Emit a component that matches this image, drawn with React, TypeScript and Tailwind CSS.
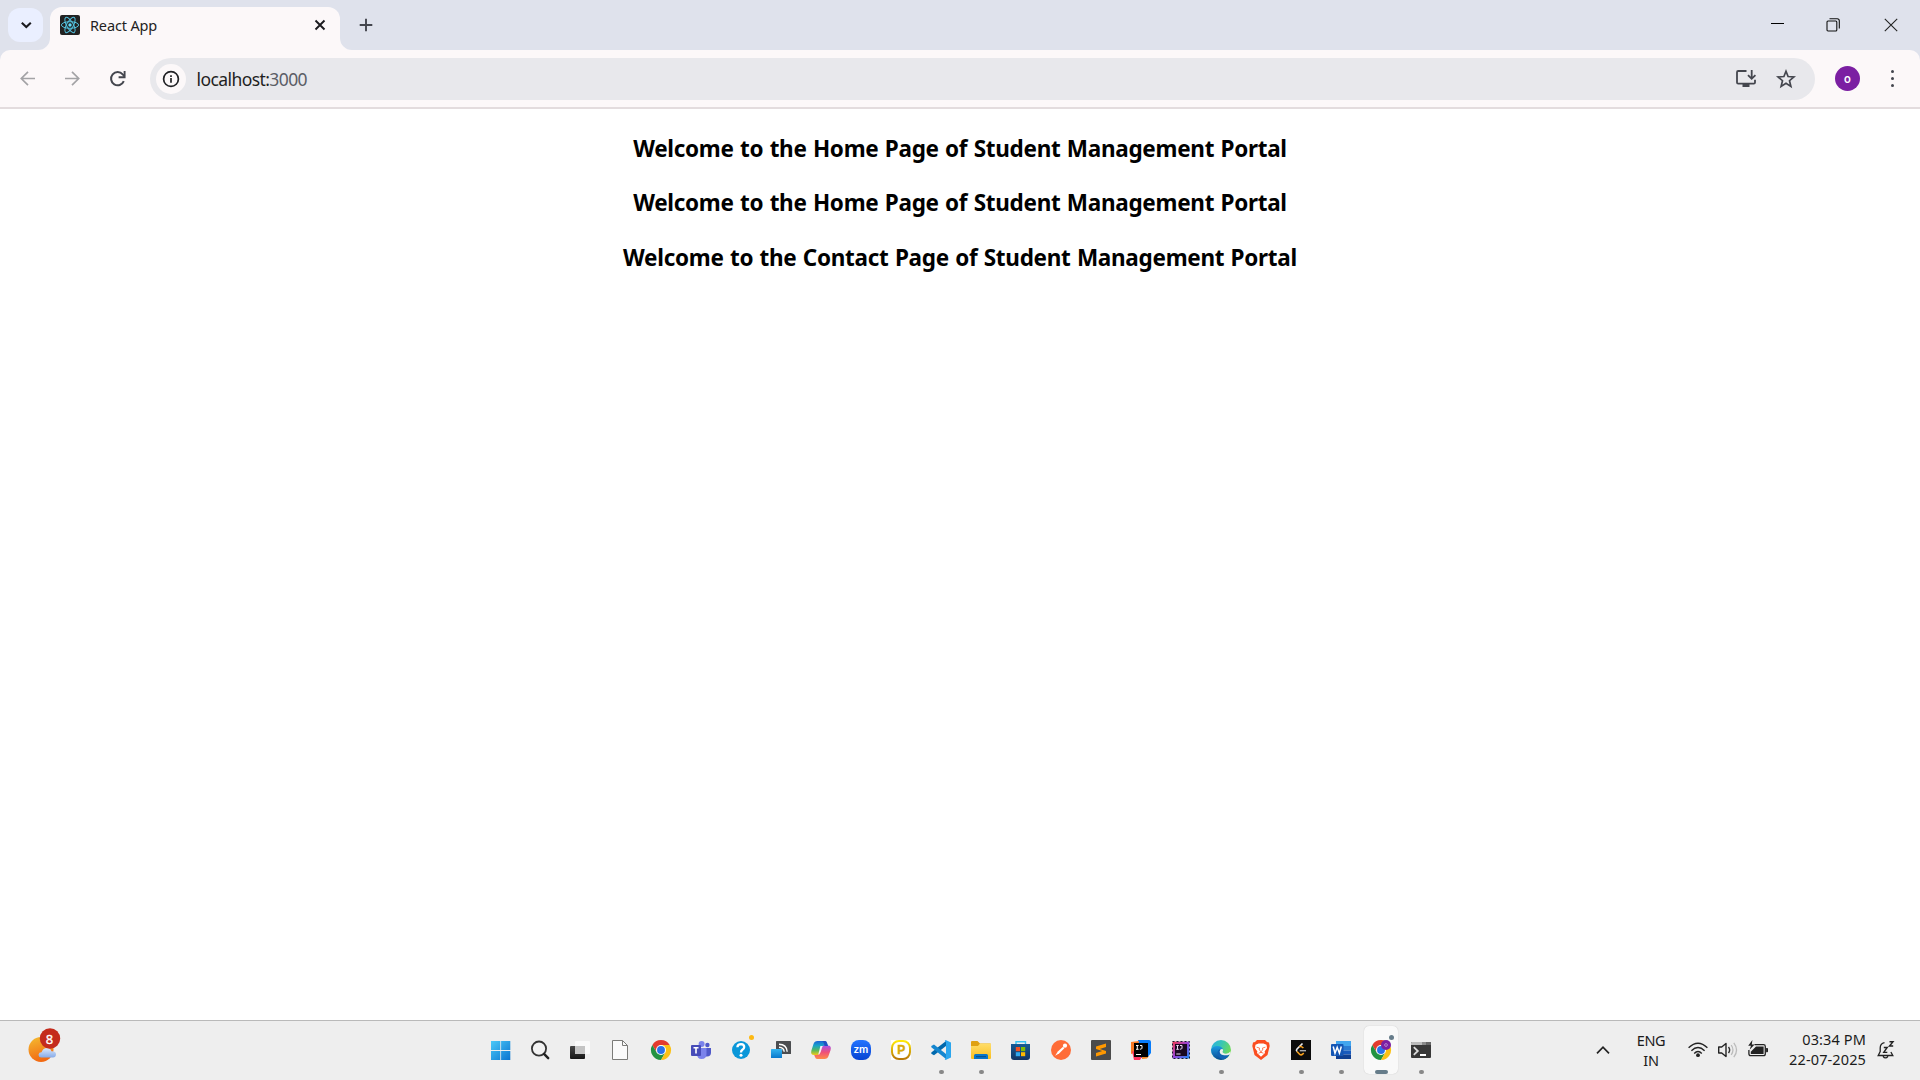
import type { ReactNode } from "react";

type IconProps = { children: ReactNode; size?: number; box?: string; className?: string };

function Icon({ children, size = 20, box, className = "" }: IconProps) {
  return (
    <svg width={size} height={size} viewBox={box ?? `0 0 ${size} ${size}`} fill="none" className={`shrink-0 overflow-visible ${className}`}>
      {children}
    </svg>
  );
}

const uiFont = "font-['Noto_Sans','Open_Sans',sans-serif]";

function ReactLogo() {
  return (
    <Icon>
      <rect width="20" height="20" rx="2" fill="#222" />
      <g stroke="#53c1de" strokeWidth="1">
        <ellipse cx="10" cy="10" rx="8.6" ry="3.3" />
        <ellipse cx="10" cy="10" rx="8.6" ry="3.3" transform="rotate(60 10 10)" />
        <ellipse cx="10" cy="10" rx="8.6" ry="3.3" transform="rotate(120 10 10)" />
      </g>
      <circle cx="10" cy="10" r="1.7" fill="#61dafb" />
    </Icon>
  );
}

function TabStrip() {
  return (
    <div className="flex h-[50px] items-end bg-[#dfe2ec]">
      <div className="mb-2 ml-2 flex h-[34px] w-[35px] items-center justify-center rounded-xl bg-[#eaefff]">
        <Icon size={12}>
          <path d="M1.8 3.8L6.3 8.1L10.8 3.8" stroke="#1b1b1f" strokeWidth="2.1" />
        </Icon>
      </div>
      <div className="relative ml-[7px] flex h-[43px] w-[290px] items-center rounded-t-xl bg-[#fcf8f9] pr-[14px] pb-[7px] pl-[10px]">
        <svg className="absolute bottom-0 -left-3" width="12" height="12" viewBox="0 0 12 12">
          <path d="M12 0V12H0A12 12 0 0 0 12 0Z" fill="#fcf8f9" />
        </svg>
        <svg className="absolute -right-3 bottom-0" width="12" height="12" viewBox="0 0 12 12">
          <path d="M0 0V12H12A12 12 0 0 1 0 0Z" fill="#fcf8f9" />
        </svg>
        <ReactLogo />
        <span className="ml-[10px] flex-1 text-[14.5px] leading-5 tracking-[-0.15px] text-[#1f1f23]">React App</span>
        <Icon size={12}>
          <path d="M1.5 1.5L10.5 10.5M10.5 1.5L1.5 10.5" stroke="#1b1b1f" strokeWidth="1.9" />
        </Icon>
      </div>
      <div className="mb-[18px] ml-[19px]">
        <Icon size={14}>
          <path d="M7 .7V13.3M.7 7H13.3" stroke="#44464e" strokeWidth="1.9" />
        </Icon>
      </div>
      <div className="mr-[22px] mb-[18px] ml-auto flex items-center">
        <Icon size={14}>
          <path d="M1 5.5H14" stroke="#000" />
        </Icon>
        <Icon size={14} className="ml-[42px]">
          <rect x="1" y="3" width="9.8" height="10" rx="1" stroke="#111" strokeWidth="1.1" />
          <path d="M3.5 .7H11.2Q13.3 .7 13.3 2.8V10.5" stroke="#111" strokeWidth="1.1" />
        </Icon>
        <Icon size={14} className="ml-[44px]">
          <path d="M.8 .8L13.2 13.2M13.2 .8L.8 13.2" stroke="#222" strokeWidth="1.1" />
        </Icon>
      </div>
    </div>
  );
}

function Toolbar() {
  return (
    <div className="bg-[#dfe2ec]">
      <div className="flex h-[59px] items-center rounded-t-[10px] border-b-2 border-[#e3dcde] bg-[#fcf8f9] pl-5">
        <Icon size={15}>
          <path d="M15 7.5H1.5M8 .9L1.3 7.5L8 14.1" stroke="#a3a3a6" strokeWidth="1.7" />
        </Icon>
        <Icon size={15} className="ml-[30px]">
          <path d="M0 7.5H13.5M7 .9L13.7 7.5L7 14.1" stroke="#a3a3a6" strokeWidth="1.7" />
        </Icon>
        <Icon size={16} className="ml-[30px]">
          <path d="M13.8 10.2A6.6 6.6 0 1 1 12.7 3.4L14.5 5.3" stroke="#44464e" strokeWidth="2" />
          <path d="M14.6 0V6.2H8.6" stroke="#44464e" strokeWidth="1.9" />
        </Icon>
        <div className="ml-6 flex h-[42px] w-[1665px] items-center rounded-full bg-[#e8e8ec] pr-[19px] pl-[6px]">
          <div className="flex size-[30px] items-center justify-center rounded-full bg-[#fcf8f9]">
            <Icon size={16}>
              <circle cx="8" cy="8" r="7.4" stroke="#202124" strokeWidth="1.7" />
              <path d="M8 7V11.8M8 4.2V6" stroke="#202124" strokeWidth="1.7" />
            </Icon>
          </div>
          <span className="ml-[10.5px] flex-1 text-[17.5px] leading-6 tracking-[-0.58px] text-[#1f1f23]">
            localhost:<span className="text-[#5b5d66]">3000</span>
          </span>
          <Icon size={20} className="mr-5">
            <path d="M10.5 2H2.2Q1 2 1 3.2V13.4Q1 14.6 2.2 14.6H17.8Q19 14.6 19 13.4V10.8" stroke="#44464e" strokeWidth="1.8" />
            <path d="M6.5 15H13.5V18H6.5Z" fill="#44464e" />
            <path d="M15.7 1V9.5M12 6.1L15.7 9.8L19.4 6.1" stroke="#44464e" strokeWidth="1.8" />
          </Icon>
          <Icon size={20}>
            <path d="M10 2.2L12.1 7.5L17.9 8L13.5 11.7L14.9 17.4L10 14.3L5.1 17.4L6.5 11.7L2.1 8L7.9 7.5Z" stroke="#44464e" strokeWidth="1.7" />
          </Icon>
        </div>
        <div className="ml-5 flex size-[25px] items-center justify-center rounded-full bg-[#7b1fa2] font-['Roboto',sans-serif] text-[12px] leading-none font-medium text-white">o</div>
        <div className="ml-[30.5px] flex flex-col gap-[3.5px]">
          {[0, 1, 2].map((i) => (
            <span key={i} className="size-[3.5px] rounded-full bg-[#44464e]" />
          ))}
        </div>
      </div>
    </div>
  );
}

function Chrome() {
  return (
    <Icon box="0 0 48 48">
      <path d="M3.215 12A24 24 0 0 1 44.785 12H24L13.608 30Z" fill="#e33b2e" />
      <path d="M3.215 12L13.608 30H34.392L24 48A24 24 0 0 1 3.215 12Z" fill="#229342" />
      <path d="M24 12H44.785A24 24 0 0 1 24 48L34.392 30Z" fill="#fbc116" />
      <circle cx="24" cy="24" r="12" fill="#fff" />
      <circle cx="24" cy="24" r="9.5" fill="#2a72e8" />
    </Icon>
  );
}

function Gradient({ id, stops, x2 = 0, y2 = 1 }: { id: string; stops: string[]; x2?: number; y2?: number }) {
  return (
    <linearGradient id={id} x1="0" y1="0" x2={x2} y2={y2}>
      {stops.map((c, i) => (
        <stop key={c} offset={i / (stops.length - 1)} stopColor={c} />
      ))}
    </linearGradient>
  );
}

type App = { name: string; state?: "open" | "active"; icon: ReactNode };

const apps: App[] = [
  {
    name: "start",
    icon: (
      <Icon>
        <Gradient id="win" stops={["#4cc9f8", "#0a74d0"]} x2={1} />
        <path d="M0 1H9.3V10H0ZM10.1 1H19.3V10H10.1ZM0 11H9.3V20H0ZM10.1 11H19.3V20H10.1Z" fill="url(#win)" />
      </Icon>
    ),
  },
  {
    name: "search",
    icon: (
      <Icon>
        <circle cx="8" cy="8.6" r="7.1" fill="#f2f2f2" stroke="#333" strokeWidth="1.8" />
        <path d="M13 13.8L17.2 18.2" stroke="#222" strokeWidth="2.4" strokeLinecap="round" />
      </Icon>
    ),
  },
  {
    name: "task-view",
    icon: (
      <Icon>
        <Gradient id="tv" stops={["#454545", "#151515"]} />
        <rect x="0" y="6" width="15" height="13" rx="1" fill="url(#tv)" transform="translate(-1 0)" />
        <rect x="4" y="1" width="15" height="13" rx="1" fill="#fafafa" />
        <path d="M4 6H14V14H4Z" fill="#c4c4c4" />
      </Icon>
    ),
  },
  {
    name: "document",
    icon: (
      <Icon>
        <path d="M1.5 .5H11.5L16.5 5.5V19.5H1.5Z" fill="#fafafa" stroke="#7b7b78" />
        <path d="M11.5 .5V5.5H16.5" stroke="#7b7b78" />
      </Icon>
    ),
  },
  { name: "chrome", icon: <Chrome /> },
  {
    name: "teams",
    icon: (
      <Icon>
        <circle cx="16.4" cy="5" r="2.2" fill="#5059c9" />
        <path d="M13 8H20V12.5Q20 16.5 16 16.5H13Z" fill="#5059c9" />
        <circle cx="10.6" cy="4" r="3" fill="#7b83eb" />
        <path d="M6 8H15.5V14Q15.5 19 10.6 19Q6 19 6 14Z" fill="#7b83eb" />
        <rect y="5" width="10" height="11" rx="1" fill="#464bb8" />
        <path d="M2.5 7.8H7.5M5 7.8V13.5" stroke="#fff" strokeWidth="1.6" />
      </Icon>
    ),
  },
  {
    name: "help",
    icon: (
      <Icon>
        <circle cx="10" cy="10" r="9" fill="#0a97d9" />
        <path d="M6.4 7.3Q6.6 4.2 10.1 4.2Q13.3 4.4 13.2 7.1Q13.2 8.7 11.4 9.8Q10 10.7 10 12.5" stroke="#fff" strokeWidth="2.3" />
        <circle cx="10" cy="15.3" r="1.5" fill="#fff" />
        <circle cx="20.5" cy="-2.5" r="2.5" fill="#fdb913" />
      </Icon>
    ),
  },
  {
    name: "cast",
    icon: (
      <Icon>
        <Gradient id="cast" stops={["#35b5f0", "#0a78cc"]} />
        <rect x="5" y="1" width="15" height="13" rx=".6" fill="#4b4d50" />
        <path d="M8 4.3Q15.6 4.3 16.2 11.8M8 7.2Q12.8 7.4 13.2 11.8" stroke="#fff" strokeWidth="1.4" />
        <circle cx="9.8" cy="10.4" r="1.4" fill="#fff" />
        <rect y="9" width="11" height="9" rx=".6" fill="url(#cast)" />
      </Icon>
    ),
  },
  {
    name: "copilot",
    icon: (
      <Icon>
        <Gradient id="cp1" stops={["#1b64d8", "#18a4c8", "#58b85c", "#f2c916"]} />
        <Gradient id="cp2" stops={["#a850e8", "#ef5078", "#ff8b48"]} />
        <path d="M6.5 1H14Q15.4 1 16 3L17 6H13.8Q12 6 11.4 8L9.6 13.4Q9 15 7 15H3Q-.7 15 .4 10.5L2.5 4Q3.4 1 6.5 1Z" fill="url(#cp1)" />
        <path d="M13.5 19H6Q4.6 19 4 17L3.2 15H6.2Q8 15 8.6 13L10.4 7.2Q11 5.5 13 5.5H17Q20.7 5.5 19.6 10L17.5 16Q16.6 19 13.5 19Z" fill="url(#cp2)" />
        <path d="M9.4 6H12Q11.3 6.6 11 7.8L9.7 12L8.2 14.4H7.3Z" fill="#f5eff4" />
        <path d="M11 1H14Q15.4 1 16 3L17 6H13.5Q12.8 1.7 11 1Z" fill="#214fc4" />
      </Icon>
    ),
  },
  {
    name: "zoom",
    icon: (
      <Icon>
        <Gradient id="zm" stops={["#2474ff", "#0743d2"]} />
        <rect width="20" height="20" rx="8" fill="url(#zm)" />
        <text x="10" y="13" textAnchor="middle" fontFamily="Lato" fontWeight="700" fontSize="11" fill="#fff">zm</text>
      </Icon>
    ),
  },
  {
    name: "p-app",
    icon: (
      <Icon>
        <Gradient id="pp" stops={["#ffe90a", "#b87808"]} />
        <rect width="20" height="20" fill="#fff" />
        <rect x="1" y="1" width="18" height="18" rx="7" fill="#fff" stroke="url(#pp)" strokeWidth="2" />
        <text x="10.2" y="14.2" textAnchor="middle" fontFamily="Liberation Sans" fontWeight="700" fontSize="12" fill="#d8a90b" stroke="#d8a90b" strokeWidth=".4">P</text>
      </Icon>
    ),
  },
  {
    name: "vscode",
    state: "open",
    icon: (
      <Icon>
        <path d="M15 1L15 6L3 15.2L.3 13.8V12.6Z" fill="#0068ad" />
        <path d="M15 19V14L3 4.6L.3 6V7.2Z" fill="#1486cf" />
        <path d="M14.6 0L20 2.4V17.6L14.6 20L13.7 19.2L15 17.4V2.5L13.7 .9Z" fill="#2ba6ee" />
      </Icon>
    ),
  },
  {
    name: "explorer",
    state: "open",
    icon: (
      <Icon>
        <Gradient id="fo" stops={["#ffdd69", "#f9bf20"]} />
        <path d="M0 2Q0 1 1 1H6.5L9 3.5H19Q20 3.5 20 4.5V10H0Z" fill="#dfa112" />
        <path d="M0 6H7L9 3.5H20V18Q20 19 19 19H1Q0 19 0 18Z" fill="url(#fo)" />
        <path d="M3 19V15.5Q3 14 4.5 14H15.5Q17 14 17 15.5V19Z" fill="#0875c9" />
        <path d="M5 16.7H15" stroke="#094c80" />
      </Icon>
    ),
  },
  {
    name: "store",
    icon: (
      <Icon>
        <Gradient id="st" stops={["#155a94", "#123463"]} />
        <path d="M5 5V1.8H14.5V5" stroke="#35c1f1" strokeWidth="1.4" />
        <path d="M0 4H19V17Q19 20 16 20H3Q0 20 0 17Z" fill="url(#st)" />
        <path d="M4.8 7H9V11.2H4.8Z" fill="#f25022" />
        <path d="M10 7H14.2V11.2H10Z" fill="#7fba00" />
        <path d="M4.8 12.2H9V16.2H4.8Z" fill="#31a8ee" />
        <path d="M10 12.2H14.2V16.2H10Z" fill="#ffb900" />
      </Icon>
    ),
  },
  {
    name: "postman",
    icon: (
      <Icon>
        <circle cx="10" cy="10" r="10" fill="#ff6c37" />
        <path d="M4.2 15.8L6.8 11.6L12 6.8L13.4 8.3L8.4 13.3L4.2 15.8Z" fill="#fff" />
        <circle cx="14" cy="5.7" r="2.1" fill="#fff" />
      </Icon>
    ),
  },
  {
    name: "sublime",
    icon: (
      <Icon>
        <rect width="20" height="20" rx="1" fill="#4b4b4b" />
        <path d="M15 3.4V7L8.7 9L15 11V13.4L5 16.6V13L11.3 11L5 9V6.6Z" fill="#ff9800" />
      </Icon>
    ),
  },
  {
    name: "intellij",
    icon: (
      <Icon>
        <path d="M7 0H18Q20 0 20 2V13L16 18H10Z" fill="#087cfa" />
        <path d="M0 2L8 1L6 12L0 14Z" fill="#f97a25" />
        <path d="M1 11L12 15L9 20H3Z" fill="#fe315d" />
        <path d="M11 16H18L16 18.5L11 19Z" fill="#f58a22" />
        <rect x="3" y="3" width="14" height="14" fill="#000" />
        <path d="M5 5.5H7.6M6.3 5.5V9.3M5 9.3H7.6M9 5.5H11V8.2Q11 9.3 8.8 9.2M5 14.5H10" stroke="#fff" strokeWidth="1" />
      </Icon>
    ),
  },
  {
    name: "intellij-edu",
    icon: (
      <Icon>
        <Gradient id="ij" stops={["#f4384c", "#9443d8", "#168bf4"]} x2={1} />
        <rect x="1.5" y="1.5" width="17" height="17" fill="url(#ij)" stroke="#161d30" strokeDasharray="2 2" />
        <path d="M4 4H16V16H4Z" fill="#190820" />
        <path d="M5.3 5.5H7.8M6.5 5.5V9.3M5.3 9.3H7.8M9 5.5H11V8.2Q11 9.3 8.8 9.2M5.3 14H9.5" stroke="#eadcf3" strokeWidth="1" />
      </Icon>
    ),
  },
  {
    name: "edge",
    state: "open",
    icon: (
      <Icon>
        <Gradient id="ed1" stops={["#28afe8", "#39c6b3", "#70dc55"]} x2={1} y2={0.5} />
        <Gradient id="ed2" stops={["#1b9de2", "#0b4a93"]} />
        <circle cx="10" cy="10" r="10" fill="url(#ed1)" />
        <path d="M.1 9.5Q2 5.8 6.5 6Q11 6.2 12 9.5Q9 8.8 8.5 11.2Q8.5 15.2 13 15.3Q16.5 15.3 18.5 14.3Q15.7 20 10 20A10 10 0 0 1 .1 9.5Z" fill="url(#ed2)" />
        <path d="M10 9Q6 9.8 6.6 14Q7.7 18.8 13 19.4Q16.7 18 18.5 14.5Q15.8 16 13 15.5Q8.3 14.5 8.8 11Z" fill="#1064b5" />
        <path d="M11.8 9.2Q12.5 10.3 11.6 11.6Q11.4 13.6 15 13.7Q18 13.5 19.3 11.5L20 15L18.5 14.4Q16 15.6 13 15.2Q8.6 14.4 8.7 11.4Q9 8.7 11.8 9.2Z" fill="#eee" />
      </Icon>
    ),
  },
  {
    name: "brave",
    icon: (
      <Icon>
        <path d="M6 0H14L16 2L18 2.5L18.7 6L16.5 15L10 20L3.5 15L1.3 6L2 2.5L4 2Z" fill="#fb4d20" />
        <path d="M7.6 3.5H12.4L15.5 4.8L16 8L13.6 11.4L14 13L10 16.8L6 13L6.4 11.4L4 8L4.5 4.8Z" fill="#fff" />
        <path d="M5.6 7.2L8.5 8L8.2 10L10 11.5L11.8 10L11.5 8L14.4 7.2M10 11V13M7.5 13.2L10 12.4L12.5 13.2" stroke="#fb4d20" strokeWidth=".7" />
      </Icon>
    ),
  },
  {
    name: "leetcode",
    state: "open",
    icon: (
      <Icon>
        <rect width="20" height="20" fill="#0b0b0b" />
        <path d="M11.5 3.5L6 9Q4.8 10.3 6 11.5" stroke="#eee" strokeWidth="1.6" />
        <path d="M6 11.5L8.6 14.2Q10 15.6 11.6 14.2L12.7 13M8.3 6.8Q10 5.7 12.4 8" stroke="#f8a01c" strokeWidth="1.6" />
        <path d="M8.8 10.7H15" stroke="#aaa" strokeWidth="1.4" />
      </Icon>
    ),
  },
  {
    name: "word",
    state: "open",
    icon: (
      <Icon>
        <path d="M5 1H20V6H5Z" fill="#41a5ee" />
        <path d="M5 6H20V10.5H5Z" fill="#2b7cd3" />
        <path d="M5 10.5H20V14.5H5Z" fill="#185abd" />
        <path d="M5 14.5H20V19H5Z" fill="#103f91" />
        <rect y="4" width="12.5" height="12" rx="1" fill="#1456b5" />
        <path d="M2.2 6.5L4 13.2L6.2 7.3L8.4 13.2L10.3 6.5" stroke="#fff" strokeWidth="1.5" />
      </Icon>
    ),
  },
  {
    name: "chrome-profile",
    state: "active",
    icon: (
      <div className="relative">
        <Chrome />
        <svg className="absolute -top-[5px] left-[10px]" width="14" height="16" viewBox="0 0 14 16">
          <circle cx="5" cy="10" r="5" fill="#7b1fa2" />
          <circle cx="5" cy="10" r="1.4" fill="none" stroke="#b57dce" />
          <circle cx="10.5" cy="2.5" r="2.5" fill="#667c8a" />
        </svg>
      </div>
    ),
  },
  {
    name: "terminal",
    state: "open",
    icon: (
      <Icon>
        <rect y="2" width="20" height="16" rx="1" fill="#383838" />
        <path d="M0 5V3Q0 2 1 2H11V5Z" fill="#bbb" />
        <path d="M11 2H15.5V5H11Z" fill="#8a8a8a" />
        <path d="M15.5 2H19Q20 2 20 3V5H15.5Z" fill="#666" />
        <path d="M2.8 7.2L6.8 11L2.8 14.8" stroke="#ddd" strokeWidth="1.8" />
        <path d="M9 15H15" stroke="#fff" strokeWidth="2" />
      </Icon>
    ),
  },
];

function Taskbar() {
  return (
    <div className="flex h-[60px] border-t border-[#b9b9b9] bg-[#eeeeee]">
      <div className="w-[481px] pt-[6px] pl-[28px]">
        <svg width="34" height="36" viewBox="0 0 34 36">
          <Gradient id="sun" stops={["#f4bd32", "#f26a12"]} x2={0.3} />
          <Gradient id="cloud" stops={["#dce9fb", "#87abe8"]} />
          <circle cx="13" cy="22.5" r="12.5" fill="url(#sun)" />
          <path d="M13 30.5Q10.5 30.2 10.5 27.7Q10.8 25.3 13.5 25.3Q15 21 19 21Q22.5 21 23.4 24.2Q28 24 28 27.5Q27.8 30.5 25 30.5Z" fill="url(#cloud)" />
          <circle cx="22" cy="11.5" r="10.2" fill="#c42b1c" />
          <text x="21.5" y="16.5" textAnchor="middle" fontFamily="Noto Sans" fontSize="13" fill="#fff" stroke="#fff" strokeWidth=".3">8</text>
        </svg>
      </div>
      <div className="flex">
        {apps.map(({ name, state, icon }) => (
          <div key={name} className="flex w-10 justify-center pt-[5px]">
            <div
              className={
                state === "active"
                  ? "flex h-12 w-[34px] flex-col items-center justify-between rounded-[5px] bg-[#f9f9f9] pt-[14px] shadow-[0_0_1px_#bbb]"
                  : "flex h-12 w-[34px] flex-col items-center justify-between pt-[14px]"
              }
            >
              {icon}
              {state === "active" && <span className="h-1 w-[13px] rounded-full bg-[#667c8a]" />}
              {state === "open" && <span className="h-1 w-[5px] rounded-full bg-[#888]" />}
            </div>
          </div>
        ))}
      </div>
      <div className="flex flex-1 items-center pb-px pl-[155px] text-[14.5px] leading-5 text-[#1b1b1b]">
        <Icon size={14}>
          <path d="M1 10.3L7 4.2L13 10.3" stroke="#222" strokeWidth="1.7" />
        </Icon>
        <div className="ml-[26px] w-[30px] pb-px text-center tracking-[-0.3px]">
          ENG
          <br />
          IN
        </div>
        <Icon className="ml-[22px]">
          <path d="M.6 7.8Q10-1.2 19.4 7.8M3.4 10.7Q10 4.2 16.6 10.7M6.2 13.4Q10 9.7 13.8 13.4" stroke="#222" strokeWidth="1.4" />
          <circle cx="10" cy="15.2" r="1.9" fill="#222" />
        </Icon>
        <Icon className="ml-[10px]">
          <path d="M.7 7H3.7L8 3.5V16.5L3.7 13H.7Z" stroke="#222" strokeWidth="1.4" strokeLinejoin="round" />
          <path d="M10.5 7Q12.8 10 10.5 13" stroke="#333" strokeWidth="1.4" />
          <path d="M13.2 5Q16.7 10 13.2 15M15.8 2.8Q21.3 10 15.8 17.2" stroke="#bbb" strokeWidth="1.3" />
        </Icon>
        <Icon className="ml-[10px]">
          <path d="M6.5 4.6H15.5Q17.3 4.6 17.3 6.4V13.7Q17.3 15.7 15.5 15.7H2.8Q.9 15.7.9 13.7V10" stroke="#222" strokeWidth="1.3" />
          <path d="M8 6.4H15.6V14H2.8V11.8Z" fill="#222" />
          <path d="M18.1 8H19.2Q20 8 20 9V11.2Q20 12.2 19.2 12.2H18.1Z" fill="#222" />
          <path d="M4.4 0L.2 5.8H3L1.6 9.7L6.6 4.4H3.8Z" fill="#222" />
        </Icon>
        <div className="ml-auto pb-[2px] text-right tracking-[0.12px]">
          03:34 PM
          <br />
          22-07-2025
        </div>
        <Icon size={18} className="mr-[25px] ml-[11px]">
          <path d="M7.5 1.6Q3.2 2.5 3.2 7V10.5L1.2 14.5H15.8L13.9 11M6 15.3Q8.5 18.6 11 15.3" stroke="#222" strokeWidth="1.3" />
          <path d="M6.8 6.5H10.2L6.8 11.4H10.3M12.5 .8H16L12.5 5H16.2" stroke="#222" strokeWidth="1.4" />
        </Icon>
      </div>
    </div>
  );
}

const headings = [
  "Welcome to the Home Page of Student Management Portal",
  "Welcome to the Home Page of Student Management Portal",
  "Welcome to the Contact Page of Student Management Portal",
];

export default function App() {
  return (
    <div className={`flex h-screen flex-col overflow-hidden bg-white ${uiFont}`}>
      <TabStrip />
      <Toolbar />
      <main className="flex flex-1 flex-col items-center gap-[22.6px] pt-[23.6px] text-black">
        {headings.map((text, i) => (
          <h2 key={i} className="text-[22.5px] leading-8 font-bold tracking-[-0.29px] whitespace-nowrap [word-spacing:0.8px]">
            {text}
          </h2>
        ))}
      </main>
      <Taskbar />
    </div>
  );
}
